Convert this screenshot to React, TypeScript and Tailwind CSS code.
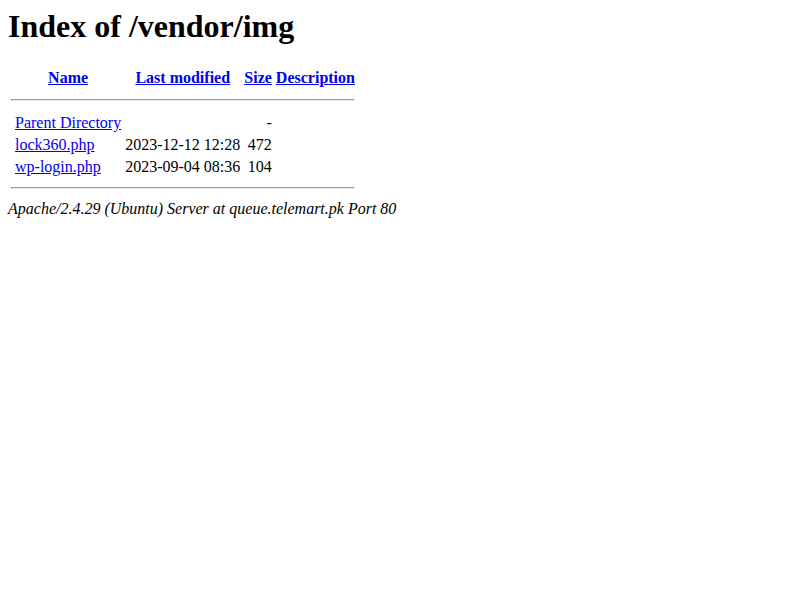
const files = [
  { name: 'lock360.php', modified: '2023-12-12 12:28', size: '472' },
  { name: 'wp-login.php', modified: '2023-09-04 08:36', size: '104' },
];

function Rule({ spacing }: { spacing: string }) {
  return (
    <tr>
      <th colSpan={5} className="p-px">
        <div className={`${spacing} h-0.5 border border-t-[#9a9a9a] border-l-[#9a9a9a] border-b-[#eeeeee] border-r-[#eeeeee]`} />
      </th>
    </tr>
  );
}

export default function App() {
  return (
    <div className="m-2 font-['Liberation_Serif',serif] text-base leading-[18.4px] text-black">
      <h1 className="mb-[21.44px] text-[32px] font-bold leading-[36.8px]">Index of /vendor/img</h1>
      <table className="border-separate border-spacing-[2px]">
        <thead>
          <tr>
            <th className="p-px align-top"></th>
            <th className="p-px text-center font-bold">
              <a href="#" className="text-[#0000ee] underline">Name</a>
            </th>
            <th className="p-px text-center font-bold">
              <a href="#" className="text-[#0000ee] underline">Last modified</a>
            </th>
            <th className="p-px text-center font-bold">
              <a href="#" className="text-[#0000ee] underline">Size</a>
            </th>
            <th className="p-px text-center font-bold">
              <a href="#" className="text-[#0000ee] underline">Description</a>
            </th>
          </tr>
        </thead>
        <tbody>
          <Rule spacing="mt-[7px] mb-[9px]" />
          <tr>
            <td className="p-px align-top"></td>
            <td className="p-px">
              <a href="#" className="text-[#0000ee] underline">Parent Directory</a>
            </td>
            <td className="p-px">&nbsp;</td>
            <td className="p-px text-right">-</td>
            <td className="p-px">&nbsp;</td>
          </tr>
          {files.map((file) => (
            <tr key={file.name}>
              <td className="p-px align-top"></td>
              <td className="p-px">
                <a href="#" className="text-[#0000ee] underline">{file.name}</a>
              </td>
              <td className="p-px text-right">{file.modified}</td>
              <td className="p-px text-right">{file.size}</td>
              <td className="p-px">&nbsp;</td>
            </tr>
          ))}
          <Rule spacing="mt-[6px] mb-2" />
        </tbody>
      </table>
      <address className="italic">Apache/2.4.29 (Ubuntu) Server at queue.telemart.pk Port 80</address>
    </div>
  );
}
